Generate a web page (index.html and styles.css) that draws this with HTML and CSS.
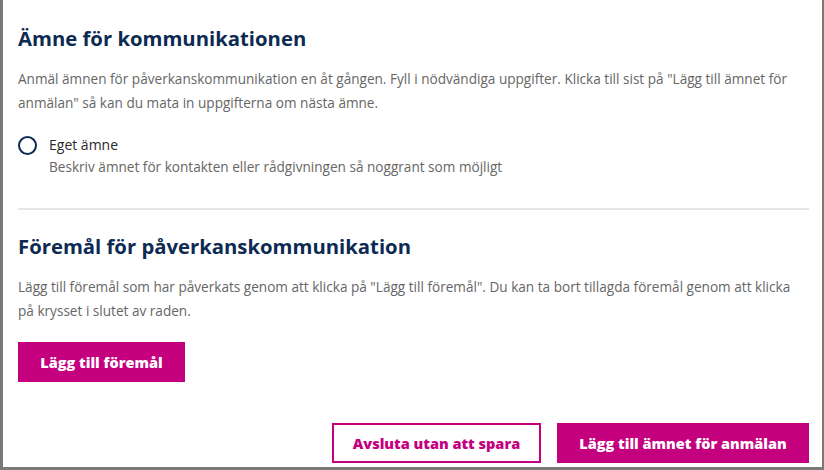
FILE: index.html
```html
<!DOCTYPE html>
<html lang="sv">

<head>
  <meta charset="UTF-8">
  <meta name="viewport" content="width=device-width, initial-scale=1.0">
  <title>Ämne för kommunikationen</title>

  <link rel="stylesheet" href="styles.css">
</head>

<body>
  <main class="dialog">
    <section class="topic">
      <h2>Ämne för kommunikationen</h2>
      <p class="lead">Anmäl ämnen för påverkanskommunikation en åt gången. Fyll i nödvändiga uppgifter. Klicka till sist på "Lägg till ämnet för anmälan" så kan du mata in uppgifterna om nästa ämne.</p>

      <label class="choice">
        <span class="radio"></span>
        <span class="choice-text">
          <span class="choice-label">Eget ämne</span>
          <span class="choice-hint">Beskriv ämnet för kontakten eller rådgivningen så noggrant som möjligt</span>
        </span>
      </label>
    </section>

    <section class="objects">
      <h2>Föremål för påverkanskommunikation</h2>
      <p class="lead">Lägg till föremål som har påverkats genom att klicka på "Lägg till föremål". Du kan ta bort tillagda föremål genom att klicka på krysset i slutet av raden.</p>
      <button class="btn btn-primary add-object">Lägg till föremål</button>
    </section>

    <footer class="actions">
      <button class="btn btn-outline">Avsluta utan att spara</button>
      <button class="btn btn-primary">Lägg till ämnet för anmälan</button>
    </footer>
  </main>
</body>

</html>
```

FILE: styles.css
```css
* {
  box-sizing: border-box;
}

body {
  margin: 0;
  font-family: "Open Sans", Lato, sans-serif;
  background: #fff;
}

.dialog {
  width: 824px;
  height: 470px;
  border-left: 3px solid #7a7a7a;
  border-right: 2px solid #7a7a7a;
  border-bottom: 3px solid #7a7a7a;
  padding: 24px 13px 0 15px;
  display: flex;
  flex-direction: column;
}

h2 {
  margin: 0;
  color: #0d2a52;
  font-size: 20.3px;
  font-weight: 700;
  line-height: 28px;
}

.lead {
  margin: 15px 0 0;
  color: #666;
  font-size: 13.6px;
  line-height: 24px;
}

.topic {
  padding-bottom: 32px;
  border-bottom: 2px solid #e6e6e6;
}

.choice {
  display: flex;
  gap: 12px;
  margin-top: 20px;
}

.radio {
  flex: none;
  width: 19px;
  height: 19px;
  margin-top: 1px;
  border: 2.5px solid #0d2a52;
  border-radius: 50%;
}

.choice-text {
  display: flex;
  flex-direction: column;
}

.choice-label {
  color: #2b2b2b;
  font-size: 14px;
  line-height: 20px;
}

.choice-hint {
  margin-top: 3px;
  color: #666;
  font-size: 13.6px;
  line-height: 18px;
}

.objects {
  padding-top: 22px;
}

.objects .lead {
  margin-top: 15px;
}

.btn {
  height: 40px;
  padding: 0 12px;
  font-family: "Open Sans", sans-serif;
  font-size: 14.5px;
  font-weight: 800;
  white-space: nowrap;
  border: 2px solid #c4007f;
  cursor: pointer;
}

.btn-primary {
  background: #c4007f;
  color: #fff;
}

.btn-outline {
  background: #fff;
  color: #c4007f;
}

.add-object {
  width: 167px;
  margin-top: 19px;
}

.actions {
  margin-top: auto;
  margin-bottom: 4px;
  display: flex;
  justify-content: flex-end;
  gap: 16px;
}

.actions .btn-outline {
  width: 209px;
}

.actions .btn-primary {
  width: 252px;
}
```
